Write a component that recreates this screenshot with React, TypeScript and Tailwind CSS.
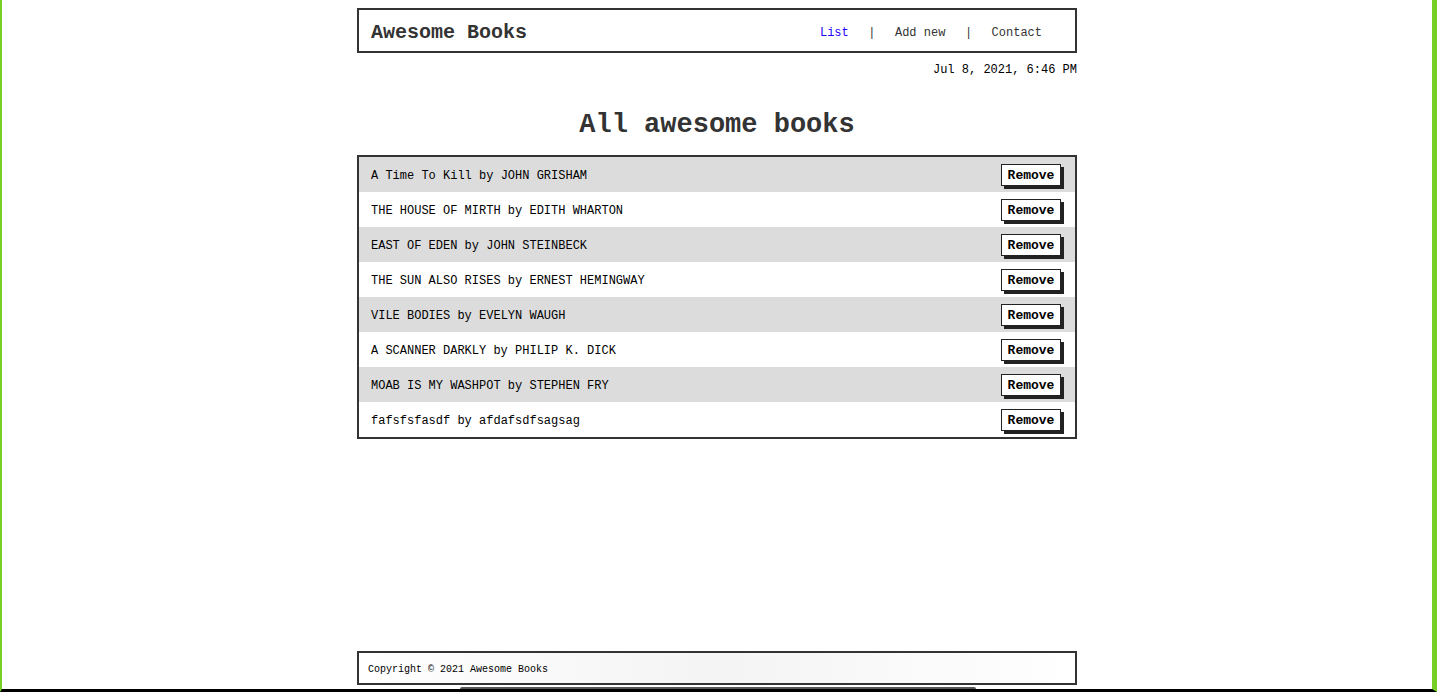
import React from 'react'

const books = [
  { title: 'A Time To Kill', author: 'JOHN GRISHAM' },
  { title: 'THE HOUSE OF MIRTH', author: 'EDITH WHARTON' },
  { title: 'EAST OF EDEN', author: 'JOHN STEINBECK' },
  { title: 'THE SUN ALSO RISES', author: 'ERNEST HEMINGWAY' },
  { title: 'VILE BODIES', author: 'EVELYN WAUGH' },
  { title: 'A SCANNER DARKLY', author: 'PHILIP K. DICK' },
  { title: 'MOAB IS MY WASHPOT', author: 'STEPHEN FRY' },
  { title: 'fafsfsfasdf', author: 'afdafsdfsagsag' },
]

const mono = { fontFamily: '"Liberation Mono", "Courier New", monospace' }

export default function App() {
  return (
    <div
      className="relative h-[692px] overflow-hidden bg-white border-l-2 border-r-[5px] border-l-[#76cf25] border-r-[#76cf25] border-b-[3px] border-b-black text-[#222]"
      style={mono}
    >
      <div className="flex h-full flex-col w-[720px] ml-[355px] pt-2">
        {/* Header */}
        <header className="flex h-[45px] items-center justify-between border-2 border-[#333] pl-3 pr-[33px] pt-[4px]">
          <h1 className="pt-[1px] text-[20px] font-bold text-[#333]">Awesome Books</h1>
          <nav className="flex items-center gap-[19.5px] text-[12px] text-[#333]">
            <a className="text-[#2200ff]">List</a>
            <span>|</span>
            <a>Add new</a>
            <span>|</span>
            <a>Contact</a>
          </nav>
        </header>

        <p className="mt-[10px] text-right text-[12px] leading-[14px] text-black">Jul 8, 2021, 6:46 PM</p>

        <h2 className="mt-[32px] text-center text-[27px] font-bold leading-[32px] text-[#333]">All awesome books</h2>

        {/* Book list */}
        <ul className="mt-[14px] border-2 border-[#333]">
          {books.map((b, i) => (
            <li
              key={i}
              className={`flex h-[35px] items-center justify-between pl-3 pr-[12px] pt-[2px] text-[12px] text-black ${
                i % 2 === 0 ? 'bg-[#dcdcdc]' : 'bg-white'
              }`}
            >
              <span>
                {b.title} by {b.author}
              </span>
              <button
                className="mr-[2px] -mt-[1px] h-[22px] w-[60px] border border-[#222] bg-white pt-[1px] text-[13px] font-bold text-black shadow-[3px_3px_0_#222]"
                style={mono}
              >
                Remove
              </button>
            </li>
          ))}
        </ul>

        {/* Footer */}
        <footer className="mt-auto mb-[4px] flex h-[34px] items-center border-2 border-[#333] bg-gradient-to-r from-white via-[#f4f4f4] to-white pl-[9px] pt-[3px] text-[10px] text-black">
          Copyright © 2021 Awesome Books
        </footer>
      </div>

      {/* bottom dock edge overlay */}
      <div className="absolute bottom-0 left-[458px] h-[2px] w-[516px] rounded-t-sm bg-[#555]" />
    </div>
  )
}
